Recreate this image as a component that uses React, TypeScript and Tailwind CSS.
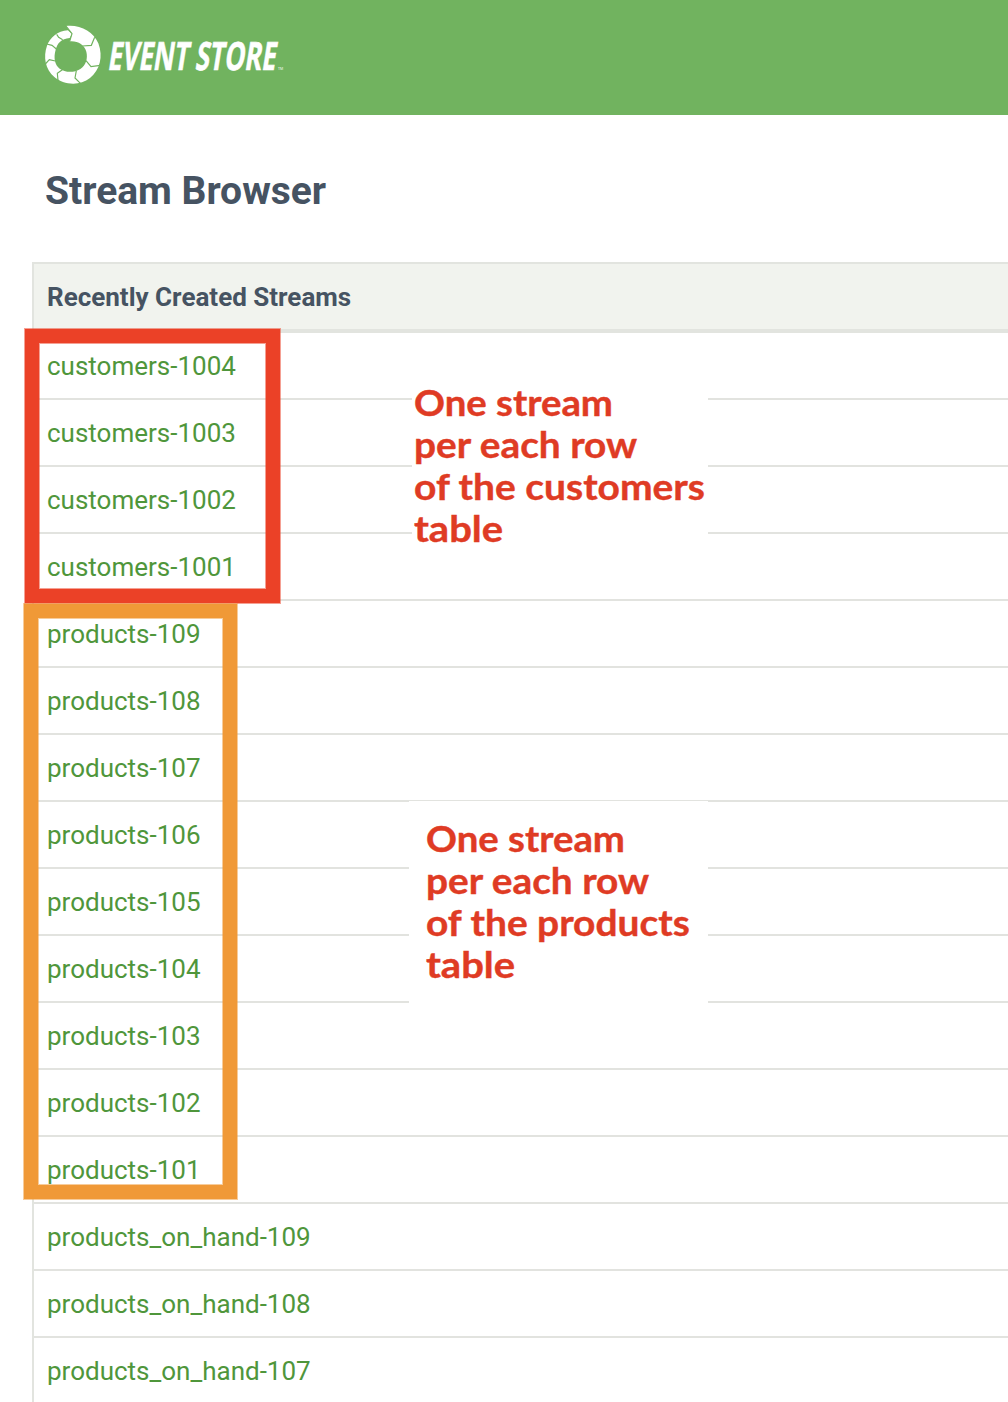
const streams = [
  "customers-1004", "customers-1003", "customers-1002", "customers-1001",
  "products-109", "products-108", "products-107", "products-106", "products-105",
  "products-104", "products-103", "products-102", "products-101",
  "products_on_hand-109", "products_on_hand-108", "products_on_hand-107",
];

function Logo() {
  return (
    <svg width="260" height="70" viewBox="0 0 260 70" aria-label="Event Store" className="block overflow-visible">
      <g transform="translate(-14 -14) scale(0.33333)">
        <path
          fillRule="evenodd"
          d="M108 48 C150 43 190 65 205 100 C220 140 210 180 180 204 C148 230 100 224 73 201 C46 178 39 140 51 107 C60 84 82 63 114 61 L117 64 L126 72 L119 94 C143 92 163 103 169 125 C174 145 168 166 151 177 C132 189 105 188 89 176 C74 164 70 143 77 119 C82 100 94 86 119 84 L126 71 Z"
          fill="white"
        />
        <g fill="none" stroke="#71b35f" strokeWidth="3.5">
          <path d="M108 48L126 71L119 94" />
          <path d="M194 82L184 106L157 108" />
          <path d="M211 166L183 170L168 152" />
          <path d="M152 221L135 204L139 182" />
          <path d="M84 211L82 190L97 179" />
          <path d="M46 162L58 149L76 153" />
          <path d="M50 102L66 106L79 117" />
          <path d="M80 73L86 82L98 89" />
        </g>
      </g>
      <text
        x="0" y="0" transform="translate(63 46) skewX(-9)"
        textLength="168" lengthAdjust="spacingAndGlyphs"
        fill="white" stroke="white" strokeWidth="0.6" fontFamily="Open Sans" fontWeight="700" fontSize="39"
      >
        EVENT STORE
      </text>
      <text x="234" y="46" fill="white" fontFamily="Open Sans" fontSize="3.5">TM</text>
    </svg>
  );
}

export default function App() {
  return (
    <div className="relative h-[1402px] w-[1008px] overflow-hidden bg-white font-['Roboto',sans-serif]">
      <header className="flex h-[115px] items-start bg-[#71b35f] pt-6 pl-11">
        <Logo />
      </header>
      <h1 className="mt-[51px] ml-[45px] h-[96px] text-[39px] leading-[50px] font-bold text-[#465362]">
        <span className="whitespace-nowrap">Stream Browser</span>
      </h1>
      <section className="ml-8 border-t-2 border-l-2 border-[#e2e4df]">
        <h2 className="flex h-[69px] items-center border-b-4 border-[#e2e4df] bg-[#f1f3ee] pt-[2px] pl-[13px] text-[26px] font-bold text-[#465362]">
          <span>Recently Created Streams</span>
        </h2>
        <ul>
          {streams.map((name) => (
            <li key={name} className="flex h-[67px] items-center border-b-2 border-[#e2e3df] pt-[2px] pl-[13px] text-[26px] text-[#4f963b]">
              <a>{name}</a>
            </li>
          ))}
        </ul>
      </section>

      <div className="absolute top-[380px] left-[412px] h-[174px] w-[296px] bg-white pt-[1px] pl-[2px] font-['Lato',sans-serif] text-[36px] leading-[42px] font-bold whitespace-nowrap text-[#df3b24] [-webkit-text-stroke:0.4px_#df3b24]">
        <div className="origin-left scale-x-[1.065]"><span>One stream</span></div>
        <div className="origin-left scale-x-[1.077]"><span>per each row</span></div>
        <div className="origin-left scale-x-[1.082]"><span>of the customers</span></div>
        <div className="origin-left scale-x-[1.11]"><span>table</span></div>
      </div>
      <div className="absolute top-[801px] left-[409px] h-[209px] w-[299px] bg-white pt-[16px] pl-[17px] font-['Lato',sans-serif] text-[36px] leading-[42px] font-bold whitespace-nowrap text-[#df3b24] [-webkit-text-stroke:0.4px_#df3b24]">
        <div className="origin-left scale-x-[1.065]"><span>One stream</span></div>
        <div className="origin-left scale-x-[1.077]"><span>per each row</span></div>
        <div className="origin-left scale-x-[1.08]"><span>of the products</span></div>
        <div className="origin-left scale-x-[1.11]"><span>table</span></div>
      </div>

      <div className="absolute top-[329px] left-[25px] h-[274px] w-[255px] border-[14px] border-[#eb4127] shadow-[0_0_0_1px_#eb412780,inset_0_0_0_1px_#eb412780]" />
      <div className="absolute top-[604px] left-[24px] h-[595px] w-[213px] border-[14px] border-[#f09937] shadow-[0_0_0_1px_#f0993780,inset_0_0_0_1px_#f0993780]" />
    </div>
  );
}
